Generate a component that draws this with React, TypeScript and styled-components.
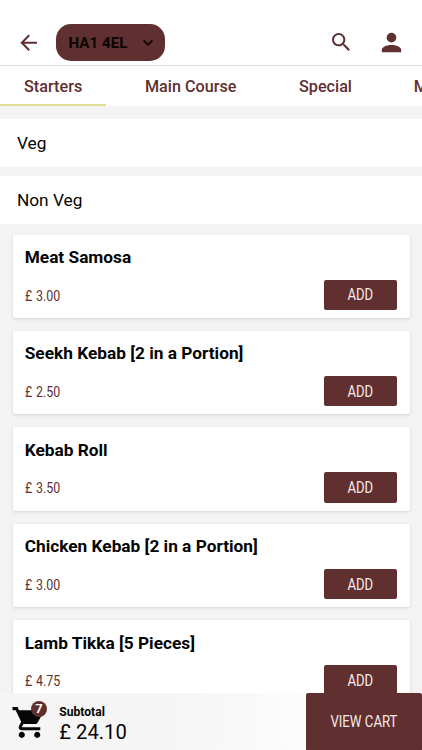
import React from "react";
import styled, { createGlobalStyle } from "styled-components";

const maroon = "#5f302f";

const GlobalStyle = createGlobalStyle`
  * { box-sizing: border-box; }
  body { margin: 0; overflow: hidden; background: #f3f3f3; font-family: Roboto, "Liberation Sans", sans-serif; color: #050505; }
  button { font: inherit; border: 0; margin: 0; padding: 0; background: none; color: inherit; }
  svg { display: block; flex: none; }
`;

const Screen = styled.div`
  height: 750px;
  width: 422px;
  overflow: hidden;
  display: flex;
  flex-direction: column;
`;

const Header = styled.header`
  flex: none;
  height: 66px;
  padding: 20px 16.5px 0 16px;
  display: flex;
  align-items: center;
  background: #fff;
  border-bottom: 1px solid #dedede;
`;

const IconButton = styled.button<{ $gap?: number }>`
  margin-left: ${(p) => p.$gap ?? 0}px;
  color: ${maroon};
`;

const PostcodePill = styled.button`
  display: flex;
  align-items: center;
  justify-content: space-between;
  width: 108.5px;
  height: 37px;
  margin-left: 15.5px;
  padding: 1px 10.8px 0 12.5px;
  border-radius: 15px;
  background: ${maroon};
  color: #0a0505;
  font-size: 15.2px;
  font-weight: 700;
`;

const Spacer = styled.div`
  flex: 1;
`;

const Tabs = styled.nav`
  flex: none;
  height: 40px;
  display: flex;
  background: #fff;
  overflow: hidden;
`;

const Tab = styled.button<{ $width: number; $active?: boolean }>`
  flex: none;
  width: ${(p) => p.$width}px;
  height: 40px;
  padding-top: 3px;
  border-bottom: 2px solid ${(p) => (p.$active ? "#e2de98" : "transparent")};
  color: ${maroon};
  font-size: 16.2px;
  font-weight: 500;
  white-space: nowrap;
`;

const Sections = styled.section`
  flex: none;
  padding: 12.6px 0 10.5px;
  display: grid;
  gap: 8.5px;
`;

const SectionRow = styled.div`
  height: 48.5px;
  padding: 0.6px 16.9px 0;
  display: flex;
  align-items: center;
  background: #fff;
  font-size: 17.3px;
`;

const Menu = styled.main`
  flex: 1;
  min-height: 0;
  overflow: hidden;
  padding: 0 12.5px;
  display: flex;
  flex-direction: column;
  gap: 12.9px;
`;

const Card = styled.article`
  flex: none;
  height: 83.5px;
  padding: 12.4px 12.5px 8px 12.2px;
  display: flex;
  flex-direction: column;
  justify-content: space-between;
  border-radius: 2px;
  background: #fff;
  box-shadow: 0 1px 3px rgba(0, 0, 0, 0.14);
`;

const ItemName = styled.h3`
  margin: 0;
  font-size: 17.28px;
  line-height: 20px;
  font-weight: 700;
`;

const BuyRow = styled.div`
  display: flex;
  align-items: center;
  justify-content: space-between;
`;

const Condensed = styled.span<{ $size: number; $scale?: number; $origin?: string }>`
  display: inline-block;
  font-size: ${(p) => p.$size}px;
  line-height: 20px;
  white-space: nowrap;
  transform: scaleX(${(p) => p.$scale ?? 0.84});
  transform-origin: ${(p) => p.$origin ?? "center"};
`;

const Price = styled(Condensed)`
  padding-top: 1.4px;
  color: ${maroon};
  word-spacing: 0.8px;
`;

const AddButton = styled.button`
  width: 73px;
  height: 30.5px;
  padding-top: 1.2px;
  border-radius: 2px;
  background: ${maroon};
  color: #f8e9e7;
`;

const Footer = styled.footer`
  flex: none;
  height: 57.5px;
  display: flex;
  background: linear-gradient(90deg, #f5f5f5 0%, #f6f6f6 45%, #fdfdfd 75%);
`;

const CartIcon = styled.div`
  position: relative;
  width: 37px;
  margin: 11px 0 0 11px;
`;

const Badge = styled.span`
  position: absolute;
  left: 20px;
  top: -3px;
  width: 16px;
  height: 16px;
  border-radius: 50%;
  background: ${maroon};
  color: #fff;
  font-size: 13px;
  line-height: 15px;
  font-weight: 600;
  text-align: center;
`;

const Summary = styled.div`
  flex: 1;
  padding: 12px 0 0 11.3px;
`;

const SubtotalLabel = styled.div`
  font-size: 12.1px;
  line-height: 15px;
  font-weight: 700;
`;

const SubtotalValue = styled.div`
  font-size: 20.2px;
  line-height: 24px;
`;

const ViewCart = styled.button`
  width: 116.5px;
  height: 58px;
  border-radius: 2px;
  background: ${maroon};
  color: #f8e9e7;
`;

const items = [
  { name: "Meat Samosa", price: "3.00" },
  { name: "Seekh Kebab [2 in a Portion]", price: "2.50" },
  { name: "Kebab Roll", price: "3.50" },
  { name: "Chicken Kebab [2 in a Portion]", price: "3.00" },
  { name: "Lamb Tikka [5 Pieces]", price: "4.75" },
];

export default function App() {
  return (
    <>
      <GlobalStyle />
      <Screen>
        <Header>
          <IconButton aria-label="Back">
            <svg width="24.5" height="24" viewBox="0 0 24.5 24" fill="none" stroke="currentColor" strokeWidth="2">
              <path d="M21 11.8H6M13.2 4.3L5.8 11.8l7.4 7.5" />
            </svg>
          </IconButton>
          <PostcodePill>
            HA1 4EL
            <svg width="12" height="12" viewBox="0 0 12 12" fill="none" stroke="currentColor" strokeWidth="1.7">
              <path d="M1.6 3.4L6 7.8l4.4-4.4" />
            </svg>
          </PostcodePill>
          <Spacer />
          <IconButton aria-label="Search">
            <svg width="24.5" height="24.5" viewBox="0 0 24 24" fill="currentColor">
              <path d="M15.5 14h-.79l-.28-.27C15.41 12.59 16 11.11 16 9.5 16 5.91 13.09 3 9.5 3S3 5.91 3 9.5 5.91 16 9.5 16c1.61 0 3.09-.59 4.23-1.57l.27.28v.79l5 4.99L20.49 19l-4.99-5zm-6 0C7.01 14 5 11.99 5 9.5S7.01 5 9.5 5 14 7.01 14 9.5 11.99 14 9.5 14z" />
            </svg>
          </IconButton>
          <IconButton $gap={23} aria-label="Account">
            <svg width="29" height="29" viewBox="0 0 24 24" fill="currentColor">
              <path d="M12,4A4,4 0 0,1 16,8A4,4 0 0,1 12,12A4,4 0 0,1 8,8A4,4 0 0,1 12,4M12,14C16.42,14 20,15.79 20,18V20H4V18C4,15.79 7.58,14 12,14Z" />
            </svg>
          </IconButton>
        </Header>
        <Tabs>
          <Tab $width={106.3} $active>Starters</Tab>
          <Tab $width={168.7}>Main Course</Tab>
          <Tab $width={101}>Special</Tab>
          <Tab $width={167}>Main Course</Tab>
        </Tabs>
        <Sections>
          <SectionRow>Veg</SectionRow>
          <SectionRow>Non Veg</SectionRow>
        </Sections>
        <Menu>
          {items.map((item) => (
            <Card key={item.name}>
              <ItemName>{item.name}</ItemName>
              <BuyRow>
                <Price $size={14.8} $origin="left">£ {item.price}</Price>
                <AddButton>
                  <Condensed $size={15.6}>ADD</Condensed>
                </AddButton>
              </BuyRow>
            </Card>
          ))}
        </Menu>
        <Footer>
          <CartIcon>
            <svg width="37" height="37" viewBox="0 0 24 24" fill="#050505">
              <path d="M7 18c-1.1 0-1.99.9-1.99 2S5.9 22 7 22s2-.9 2-2-.9-2-2-2zM1 2v2h2l3.6 7.59-1.35 2.45c-.16.28-.25.61-.25.96 0 1.1.9 2 2 2h12v-2H7.42c-.14 0-.25-.11-.25-.25l.03-.12.9-1.63h7.45c.75 0 1.41-.41 1.75-1.03l3.58-6.49c.08-.14.12-.31.12-.48 0-.55-.45-1-1-1H5.21l-.94-2H1zm16 16c-1.1 0-1.99.9-1.99 2s.89 2 1.99 2 2-.9 2-2-.9-2-2-2z" />
            </svg>
            <Badge>7</Badge>
          </CartIcon>
          <Summary>
            <SubtotalLabel>Subtotal</SubtotalLabel>
            <SubtotalValue>£ 24.10</SubtotalValue>
          </Summary>
          <ViewCart>
            <Condensed $size={15.7}>VIEW CART</Condensed>
          </ViewCart>
        </Footer>
      </Screen>
    </>
  );
}
